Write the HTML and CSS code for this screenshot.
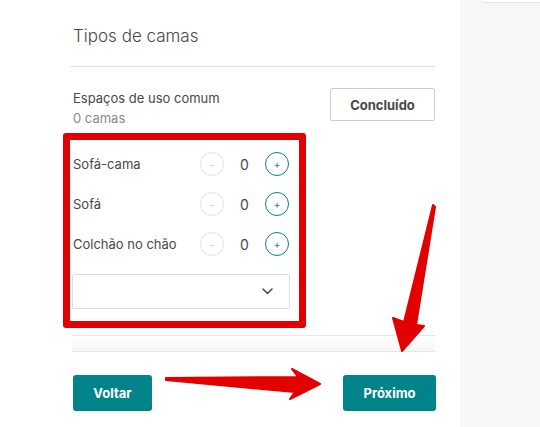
FILE: index.html
```html
<!DOCTYPE html>
<html lang="pt-BR">
<head>
    <meta charset="UTF-8">
    <meta name="viewport" content="width=device-width, initial-scale=1.0">
    <title>Tipos de camas</title>
    <link rel="stylesheet" href="styles.css">
</head>
<body>

<div class="page">
    <div class="main">
        <h2 class="title">Tipos de camas</h2>

        <!-- Room summary -->
        <div class="room">
            <div class="room-info">
                <div class="room-name">Espaços de uso comum</div>
                <div class="room-count">0 camas</div>
            </div>
            <button class="btn-outline">Concluído</button>
        </div>

        <!-- Highlighted bed list -->
        <div class="highlight">
            <div class="bed-row">
                <span class="bed-label">Sofá-cama</span>
                <button class="step step-off">&minus;</button>
                <span class="step-value">0</span>
                <button class="step">+</button>
            </div>
            <div class="bed-row">
                <span class="bed-label">Sofá</span>
                <button class="step step-off">&minus;</button>
                <span class="step-value">0</span>
                <button class="step">+</button>
            </div>
            <div class="bed-row">
                <span class="bed-label">Colchão no chão</span>
                <button class="step step-off">&minus;</button>
                <span class="step-value">0</span>
                <button class="step">+</button>
            </div>
            <div class="select">
                <svg width="11" height="7" viewBox="0 0 11 7"><path d="M1 1l4.5 4.5L10 1" fill="none" stroke="#484848" stroke-width="1.5" stroke-linecap="round" stroke-linejoin="round"/></svg>
            </div>
        </div>

        <div class="fade"></div>

        <div class="nav">
            <button class="btn-teal btn-back">Voltar</button>
            <button class="btn-teal btn-next">Próximo</button>
        </div>
    </div>

    <div class="side">
        <div class="side-card"></div>
    </div>

    <!-- red annotation arrows -->
    <svg class="arrows" width="540" height="427" viewBox="0 0 540 427">
        <polygon points="166,378 298,377 292,369 320,384 290,399 295,392 166,380" fill="#e30000" stroke="#e30000" stroke-width="2" stroke-linejoin="round"/>
        <polygon points="433,205 435,207 416,325 424,326 402,351 393,318 404,322" fill="#e30000" stroke="#e30000" stroke-width="2" stroke-linejoin="round"/>
    </svg>
</div>

</body>
</html>
```

FILE: styles.css
```css
body {
    margin: 0;
    font-family: Inter, "Noto Sans", Arial, sans-serif;
    color: #484848;
}
.page {
    position: relative;
    display: flex;
    width: 540px;
    height: 427px;
    overflow: hidden;
}
.main {
    width: 365px;
    padding: 0 25px 0 70px;
    background: #fff;
}
.side {
    flex: 1;
    background: #f7f7f7;
}
.side-card {
    margin-left: 22px;
    height: 2px;
    background: #fff;
    border-bottom: 1px solid #e6e6e6;
}
.title {
    margin: 0;
    padding: 24px 0 18px 3px;
    font-size: 17px;
    font-weight: 300;
    line-height: 24px;
    border-bottom: 1px solid #e4e4e4;
}
.room {
    display: flex;
    justify-content: space-between;
    align-items: flex-start;
    padding: 21px 0 0 3px;
}
.room-name {
    font-size: 13px;
    line-height: 20px;
}
.room-count {
    font-size: 13px;
    line-height: 20px;
    color: #8a8a8a;
}
.btn-outline {
    width: 105px;
    height: 33px;
    background: #fff;
    border: 1px solid #cfcfcf;
    border-radius: 2px;
    font-family: inherit;
    font-size: 13px;
    font-weight: 700;
    color: #484848;
}
.highlight {
    width: 226px;
    margin: 5px 0 0 -7px;
    padding: 4px 0 12px 3px;
    border: 7px solid #e30000;
    border-radius: 3px;
    position: relative;
    z-index: 1;
    background: #fff;
}
.bed-row {
    display: flex;
    align-items: center;
    height: 40px;
}
.bed-label {
    width: 127px;
    font-size: 13px;
}
.step {
    width: 24px;
    height: 24px;
    padding: 0;
    border: 1px solid #00848a;
    border-radius: 50%;
    background: #fff;
    color: #00848a;
    font-size: 10px;
    line-height: 20px;
    font-family: inherit;
}
.step-off {
    border-color: #d6e6e6;
    color: #c8d8d8;
}
.step-value {
    width: 41px;
    text-align: center;
    font-size: 14px;
}
.select {
    display: flex;
    align-items: center;
    justify-content: flex-end;
    width: 200px;
    height: 33px;
    margin: 10px 0 0 -1px;
    padding: 0 16px 0 0;
    border: 1px solid #dcdcdc;
    border-radius: 2px;
}
.fade {
    height: 15px;
    margin: 7px 0 0 2px;
    border-top: 1px solid #e6e6e6;
    border-bottom: 1px solid #e6e6e6;
    background: linear-gradient(#fff, #f6f6f6);
}
.nav {
    display: flex;
    justify-content: space-between;
    margin: 23px 0 0 3px;
}
.btn-teal {
    height: 36px;
    border: none;
    border-radius: 3px;
    background: #008489;
    color: #fff;
    font-family: inherit;
    font-size: 13px;
    font-weight: 700;
}
.btn-back {
    width: 79px;
}
.btn-next {
    width: 93px;
    margin-right: -1px;
}
.arrows {
    position: absolute;
    left: 0;
    top: 0;
    z-index: 2;
    pointer-events: none;
}
```
